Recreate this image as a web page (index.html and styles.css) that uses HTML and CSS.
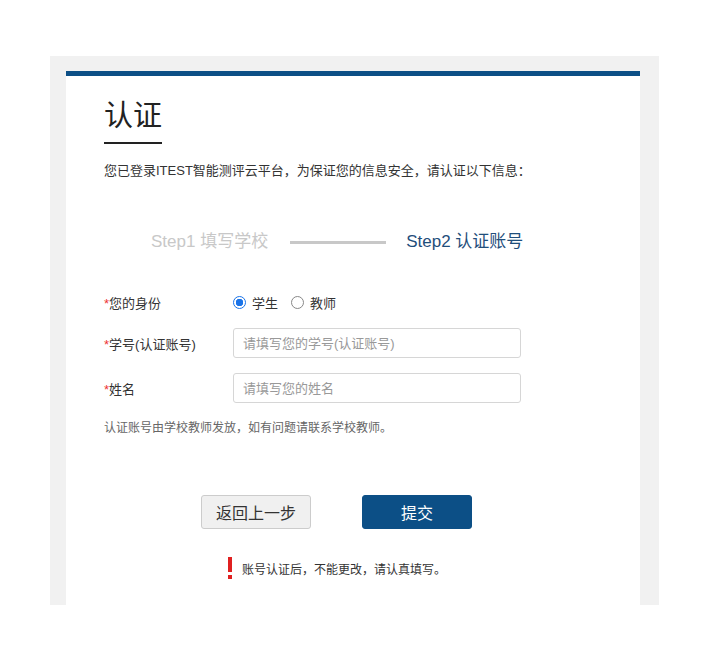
FILE: index.html
```html
<!DOCTYPE html>
<html lang="zh-CN">
<head>
    <meta charset="UTF-8">
    <meta name="viewport" content="width=device-width, initial-scale=1.0">
    <title>认证</title>
    <link rel="stylesheet" href="styles.css">
</head>
<body>
    <div class="page">
        <div class="card">
            <h1 class="title">认证</h1>
            <p class="intro">您已登录ITEST智能测评云平台，为保证您的信息安全，请认证以下信息：</p>

            <!-- Steps -->
            <div class="steps">
                <span class="step done">Step1 填写学校</span>
                <span class="step-line"></span>
                <span class="step active">Step2 认证账号</span>
            </div>

            <!-- Form -->
            <div class="form">
                <div class="form-row">
                    <label class="form-label"><i>*</i>您的身份</label>
                    <div class="radios">
                        <label class="radio"><span class="dot checked"></span>学生</label>
                        <label class="radio"><span class="dot"></span>教师</label>
                    </div>
                </div>
                <div class="form-row">
                    <label class="form-label" for="sid"><i>*</i>学号(认证账号)</label>
                    <input class="input" id="sid" type="text" placeholder="请填写您的学号(认证账号)">
                </div>
                <div class="form-row">
                    <label class="form-label" for="name"><i>*</i>姓名</label>
                    <input class="input" id="name" type="text" placeholder="请填写您的姓名">
                </div>
            </div>

            <p class="hint">认证账号由学校教师发放，如有问题请联系学校教师。</p>

            <div class="actions">
                <button class="btn btn-back">返回上一步</button>
                <button class="btn btn-submit">提交</button>
            </div>

            <p class="warn">
                <svg class="warn-mark" width="6" height="22" viewBox="0 0 6 22">
                    <rect x="1" y="0" width="4" height="15" fill="#e02020"/>
                    <rect x="1" y="18" width="4" height="4" fill="#e02020"/>
                </svg>
                账号认证后，不能更改，请认真填写。
            </p>
        </div>
    </div>
</body>
</html>
```

FILE: styles.css
```css
* {
    margin: 0;
    padding: 0;
    box-sizing: border-box;
}

:root {
    --primary: #0c4f86;
    --panel: #f1f1f1;
    --text: #333;
    --muted: #666;
    --border: #d6d6d6;
}

body {
    font-family: "Liberation Sans", Arial, "Noto Sans CJK SC", sans-serif;
    background: #fff;
    color: var(--text);
}

.page {
    margin: 56px 0 0 50px;
    width: 609px;
    height: 549px;
    background: var(--panel);
    padding: 15px 19px 0 16px;
    overflow: hidden;
}

.card {
    background: #fff;
    border-top: 5px solid var(--primary);
    height: 100%;
    padding: 22px 38px 0;
}

.title {
    display: inline-block;
    font-size: 29px;
    font-weight: normal;
    color: #222;
    line-height: 36px;
    padding-bottom: 8px;
    border-bottom: 2px solid #222;
}

.intro {
    margin-top: 18px;
    font-size: 13px;
    line-height: 18px;
}

/* Steps */
.steps {
    display: flex;
    align-items: center;
    margin: 52px 0 0 47px;
    font-size: 17px;
    line-height: 20px;
}

.step.done {
    color: #c8c8c8;
}

.step.active {
    color: #1f4e7b;
}

.step-line {
    width: 96px;
    height: 3px;
    background: #c8c8c8;
    margin: 0 20px 0 22px;
}

/* Form */
.form {
    margin-top: 41px;
    display: flex;
    flex-direction: column;
    gap: 15px;
}

.form-row {
    display: flex;
    align-items: center;
    min-height: 30px;
}

.form-row:first-child {
    min-height: 18px;
    margin-bottom: 1px;
}

.form-label {
    width: 129px;
    font-size: 13px;
    color: var(--text);
}

.form-label i {
    font-style: normal;
    color: #e33;
}

.radios {
    display: flex;
    gap: 13px;
    font-size: 13px;
}

.radio {
    display: flex;
    align-items: center;
    gap: 6px;
}

.dot {
    width: 13px;
    height: 13px;
    border: 1px solid #888;
    border-radius: 50%;
    display: inline-block;
}

.dot.checked {
    border: 1px solid #1a73e8;
    background: radial-gradient(circle, #1a73e8 0 3.5px, #fff 4px);
}

.input {
    width: 288px;
    height: 30px;
    border: 1px solid var(--border);
    border-radius: 3px;
    padding: 0 9px;
    font-size: 13px;
    font-family: inherit;
    color: var(--text);
}

.input::placeholder {
    color: #999;
}

.hint {
    margin-top: 15px;
    font-size: 12px;
    color: var(--muted);
}

/* Buttons */
.actions {
    display: flex;
    gap: 51px;
    margin: 60px 0 0 97px;
}

.btn {
    width: 110px;
    height: 34px;
    font-size: 16px;
    font-family: inherit;
    border-radius: 3px;
    cursor: pointer;
}

.btn-back {
    background: #f0f0f0;
    border: 1px solid #ccc;
    color: var(--text);
}

.btn-submit {
    background: var(--primary);
    border: 1px solid var(--primary);
    color: #fff;
}

.warn {
    display: flex;
    align-items: center;
    gap: 9px;
    margin: 28px 0 0 123px;
    font-size: 12px;
    color: var(--text);
}
```
